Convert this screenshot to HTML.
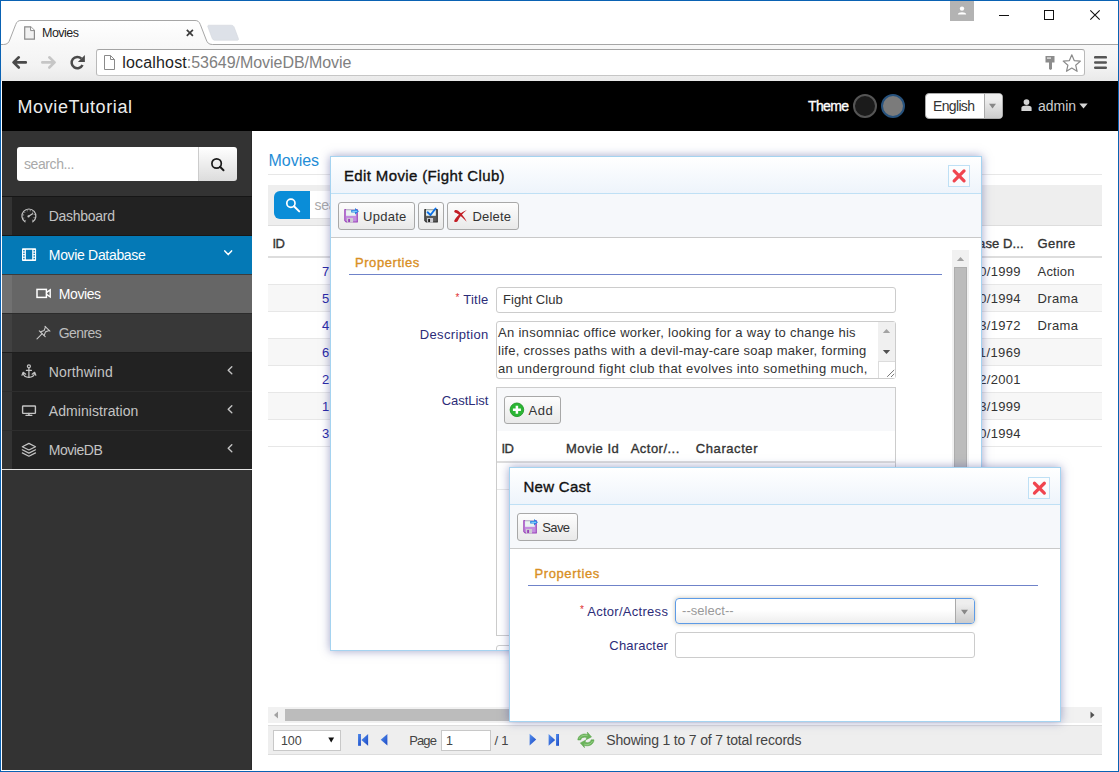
<!DOCTYPE html>
<html lang="en">
<head>
<meta charset="utf-8">
<title>Movies</title>
<style>
*{box-sizing:border-box;margin:0;padding:0}
html,body{width:1119px;height:772px;overflow:hidden;background:#fff}
body{font-family:"Liberation Sans",sans-serif;font-size:13px;color:#333;position:relative}
.a{position:absolute}
.t{position:absolute;white-space:pre;line-height:1}
svg{position:absolute;overflow:visible}
#win{left:0;top:0;width:1119px;height:772px;border:1px solid #0a62b3;z-index:50}
#toolbar{left:0;top:44px;width:1119px;height:37px;background:linear-gradient(#f8f8f8,#f3f3f3 60%,#e9e9e9)}
#urlbox{left:96px;top:49px;width:989px;height:27px;background:#fff;border:1px solid #b9b9b9;border-top-color:#a3a3a3;border-bottom-color:#c6c6c6;border-radius:3px}
#hdr{left:2px;top:81px;width:1116px;height:50px;background:#000}
.circ{width:24px;height:24px;border-radius:50%;border:2px solid #555}
#lang{left:925px;top:93px;width:78px;height:26px;background:#fff;border:1px solid #aaa;border-radius:4px;overflow:hidden}
#lang i{position:absolute;left:58px;top:0;width:19px;height:24px;border-left:1px solid #aaa;background:linear-gradient(#eee 20%,#ccc)}
#side{left:2px;top:131px;width:250px;height:639px;background:#333;border-right:1px solid #2a2a2a}
.row{left:2px;width:250px;height:39px;background:#222;border-bottom:1px solid #2d2d2d}
.row b{position:absolute;left:0;top:0;width:10px;height:38px;background:#333}
#sin{left:17px;top:147px;width:182px;height:34px;background:#fff;border-radius:3px 0 0 3px}
#sbtn{left:198px;top:147px;width:39px;height:34px;background:linear-gradient(#fff,#dcdcdc);border-left:1px solid #ccc;border-radius:0 3px 3px 0}
.btn{border:1px solid #a8a8a8;border-radius:3px;background:linear-gradient(#fdfdfd,#e9e9e9)}
.inp{border:1px solid #ccc;border-radius:3px;background:#fff}
.dlg{background:#fff;border:1px solid #a5d3f0;box-shadow:0 0 9px rgba(70,75,150,.5);overflow:hidden}
.dlg .in{position:absolute}
.tb{background:linear-gradient(#ffffff,#eef4fb);border-bottom:1px solid #bfe0f5}
.bar{background:#f6f8fb;border-bottom:1px solid #c9c9c9}
.xb{width:22px;height:22px;border:1px solid #bfe0f5;background:rgba(255,255,255,.45)}
.gl{height:1px;background:#e7e7e7;left:268px;width:834px}
.gr{left:268px;width:834px;height:27px;background:#f7f7f7}
</style>
</head>
<body>
<!-- ===== browser chrome ===== -->
<div class="a" id="toolbar"></div>
<svg style="left:0;top:0" width="1119" height="46" viewBox="0 0 1119 46">
  <defs><linearGradient id="tg" x1="0" y1="0" x2="0" y2="1"><stop offset="0" stop-color="#fff"/><stop offset="1" stop-color="#f8f8f8"/></linearGradient></defs>
  <path d="M0 44.5 H3.5 C7.5 44.5 8.7 42.5 9.7 40 L15.7 24.5 C16.8 21.6 18.3 20.5 21 20.5 H195 C197.7 20.5 199.2 21.6 200.3 24.5 L206.3 40 C207.3 42.5 208.5 44.5 212.5 44.5 H1119" fill="url(#tg)" stroke="#a6a6a6" stroke-width="1"/>
  <path d="M208 27.2 C207.4 25.7 207.9 25.2 209.4 25.2 H231 C232.8 25.2 233.6 25.9 234.2 27.3 L238.3 38.3 C238.9 39.8 238.4 40.3 236.9 40.3 H215.3 C213.5 40.3 212.7 39.6 212.1 38.2 Z" fill="#dde1e8" stroke="#d3d7de" stroke-width=".6"/>
  <!-- page icon in tab -->
  <path d="M24.7 26.8 H30.6 L34.4 30.6 V39.2 H24.7 Z" fill="#f1f1f1" stroke="#8a8a8a" stroke-width="1.2"/>
  <path d="M30.6 26.8 V30.6 H34.4" fill="#fff" stroke="#8a8a8a" stroke-width="1"/>
  <path d="M186.8 29.8 L192.9 35.9 M192.9 29.8 L186.8 35.9" stroke="#3c3c3c" stroke-width="1.7" fill="none"/>
</svg>
<div class="a" id="urlbox"></div>
<svg style="left:0;top:44px" width="1119" height="37" viewBox="0 44 1119 37">
  <!-- back -->
  <path d="M25.8 62.4 H14.5 M18.8 57.3 L13.5 62.4 L18.8 67.5" fill="none" stroke="#4a4a4a" stroke-width="2.6" stroke-linejoin="round" stroke-linecap="round"/>
  <!-- forward (disabled) -->
  <path d="M42.3 62.4 H53.6 M49.3 57.3 L54.6 62.4 L49.3 67.5" fill="none" stroke="#c6c6c6" stroke-width="2.6" stroke-linejoin="round" stroke-linecap="round"/>
  <!-- reload -->
  <path d="M81.4 58.6 A5.7 5.7 0 1 0 82.5 65" fill="none" stroke="#4a4a4a" stroke-width="2.5"/>
  <path d="M84.9 54.9 V61.9 H77.9 Z" fill="#4a4a4a"/>
  <!-- page icon -->
  <path d="M104.5 55.5 H110.5 L114.5 59.5 V69.5 H104.5 Z" fill="#fff" stroke="#8a8a8a" stroke-width="1"/>
  <path d="M110.5 55.5 V59.5 H114.5" fill="none" stroke="#8a8a8a" stroke-width="1"/>
  <!-- key -->
  <path d="M1045.5 56 H1054.5 V62.5 H1052 V69 L1050.5 70 L1049 69 V62.5 H1045.5 Z" fill="#8c8c8c"/>
  <rect x="1047" y="57.3" width="4" height="1.6" fill="#d8d8d8"/>
  <!-- star -->
  <path d="M1071.8 54.8 L1074.2 60.6 L1080.4 61.1 L1075.7 65.2 L1077.1 71.3 L1071.8 68 L1066.5 71.3 L1067.9 65.2 L1063.2 61.1 L1069.4 60.6 Z" fill="#fff" stroke="#8a8a8a" stroke-width="1.2" stroke-linejoin="round"/>
  <!-- hamburger -->
  <rect x="1094" y="56" width="13" height="2.6" rx="1.2" fill="#555"/>
  <rect x="1094" y="61.2" width="13" height="2.6" rx="1.2" fill="#555"/>
  <rect x="1094" y="66.4" width="13" height="2.6" rx="1.2" fill="#555"/>
</svg>
<!-- window controls -->
<div class="a" style="left:950px;top:1px;width:24px;height:20px;background:#b3b3b3"></div>
<svg style="left:950px;top:1px" width="24" height="20" viewBox="0 0 24 20">
  <circle cx="12" cy="7.6" r="2.2" fill="#fff"/>
  <path d="M7.8 13.6 C7.8 10.6 16.2 10.6 16.2 13.6 Z" fill="#fff"/>
</svg>
<svg style="left:990px;top:5px" width="120" height="20" viewBox="990 5 120 20">
  <path d="M999 15.5 H1009" stroke="#111" stroke-width="1"/>
  <rect x="1044.5" y="10.5" width="9" height="9" fill="none" stroke="#111" stroke-width="1"/>
  <path d="M1090.3 10.3 L1099.7 19.7 M1099.7 10.3 L1090.3 19.7" stroke="#111" stroke-width="1.1"/>
</svg>

<!-- ===== app header ===== -->
<div class="a" id="hdr"></div>
<div class="a circ" style="left:853px;top:94px;background:#1b1b1b"></div>
<div class="a circ" style="left:881px;top:94px;background:#7b7b7b;border-color:#27527d"></div>
<div class="a" id="lang"><i></i></div>
<svg style="left:988px;top:103px" width="9" height="6" viewBox="0 0 9 6"><path d="M1 .8 H8 L4.5 5.6 Z" fill="#888"/></svg>
<svg style="left:1021px;top:99px" width="11" height="12" viewBox="0 0 11 12">
  <circle cx="5.5" cy="3.1" r="2.9" fill="#d4d4d4"/>
  <path d="M.4 12 V8.8 C.4 5.8 10.6 5.8 10.6 8.8 V12 Z" fill="#d4d4d4"/>
</svg>
<svg style="left:1079px;top:103px" width="9" height="6" viewBox="0 0 9 6"><path d="M.3 .6 H8.7 L4.5 5.4 Z" fill="#d4d4d4"/></svg>

<!-- ===== sidebar ===== -->
<div class="a" id="side"></div>
<div class="a" id="sin"></div><div class="a" id="sbtn"></div>
<svg style="left:209px;top:156px" width="18" height="18" viewBox="0 0 18 18">
  <circle cx="7.6" cy="7.5" r="4.7" fill="none" stroke="#1a1a1a" stroke-width="1.7"/>
  <path d="M11 10.8 L14.5 14.2" stroke="#1a1a1a" stroke-width="2" stroke-linecap="round"/>
</svg>
<div class="a" style="left:2px;top:196px;width:250px;height:1px;background:#161616"></div>
<div class="a row" style="top:197px;border-bottom-color:#181818"><b></b></div>
<div class="a row" style="top:236px;background:#0479b6;border-bottom-color:#3c3c3c"></div>
<div class="a row" style="top:275px;background:#666;border-bottom-color:#2c2c2c"><b style="background:#717171"></b></div>
<div class="a row" style="top:314px;background:#383838;border-bottom-color:#1e1e1e"><b style="background:#414141"></b></div>
<div class="a row" style="top:353px"><b></b></div>
<div class="a row" style="top:392px"><b></b></div>
<div class="a row" style="top:431px;border-bottom-color:#222"><b></b></div>
<div class="a" style="left:2px;top:469px;width:250px;height:1px;background:#e4e4e4"></div>
<svg style="left:0;top:0" width="260" height="772" viewBox="0 0 260 772" fill="none" stroke-linecap="round" stroke-linejoin="round">
  <!-- gauge -->
  <g stroke="#c4c4c4" stroke-width="1.3">
    <path d="M25 221.8 A7 7 0 1 1 32.8 221.8" stroke-width="1.2"/>
    <path d="M25.9 220.6 A5.5 5.5 0 1 1 31.9 220.6" stroke-width="1.2" stroke-dasharray=".9 2" stroke-linecap="butt" opacity=".75"/>
    <path d="M28.6 216.3 L32.6 213.7"/>
  </g>
  <circle cx="28.5" cy="216.4" r="1.1" fill="#c4c4c4"/>
  <!-- film -->
  <g stroke="none">
    <rect x="22" y="248.2" width="14.1" height="12.8" rx=".8" fill="#fff"/>
    <rect x="25.9" y="249.8" width="6.3" height="9.6" fill="#0479b6"/>
    <g fill="#0479b6"><rect x="23.2" y="250" width="1.4" height="1.5"/><rect x="23.2" y="252.6" width="1.4" height="1.5"/><rect x="23.2" y="255.2" width="1.4" height="1.5"/><rect x="23.2" y="257.8" width="1.4" height="1.5"/>
    <rect x="33.5" y="250" width="1.4" height="1.5"/><rect x="33.5" y="252.6" width="1.4" height="1.5"/><rect x="33.5" y="255.2" width="1.4" height="1.5"/><rect x="33.5" y="257.8" width="1.4" height="1.5"/></g>
  </g>
  <!-- camera -->
  <g stroke="#fff" stroke-width="1.5" stroke-linejoin="miter">
    <rect x="37" y="289.4" width="9.4" height="8"/>
    <path d="M46.6 292.4 L50.2 289.9 V297 L46.6 294.4" stroke-width="1.4"/>
  </g>
  <!-- pin -->
  <g stroke="#c4c4c4" stroke-width="1.15">
    <path d="M37 338.8 L42 333.9"/>
    <path d="M39.3 330.8 L45.2 336.7"/>
    <path d="M45 326.3 L49.9 331.2"/>
    <path d="M44.1 335.5 L45.5 331.9 L49.2 330.5 M40.5 331.9 L44.1 330.5 L45.5 326.9"/>
  </g>
  <!-- anchor -->
  <g stroke="#c4c4c4" stroke-width="1.25">
    <circle cx="28.9" cy="366.3" r="1.5"/>
    <path d="M28.9 367.9 V377.4 M26.4 370.4 H31.4"/>
    <path d="M23.3 373.2 C23.8 378.6 34 378.6 34.5 373.2"/>
    <path d="M22 375.2 L23.2 372.3 L25.7 374.2 M35.8 375.2 L34.6 372.3 L32.1 374.2"/>
  </g>
  <!-- monitor -->
  <g stroke="#c4c4c4" stroke-width="1.4" stroke-linejoin="miter">
    <rect x="22.6" y="406" width="12.8" height="7.4" rx=".6"/>
    <path d="M28.9 413.5 V415.2" stroke-width="1.6"/>
    <path d="M25.9 415.4 H31.9" stroke-width="1.1"/>
  </g>
  <!-- layers -->
  <g stroke="#c4c4c4" stroke-width="1.2">
    <path d="M28.9 443.4 L35.5 446.7 L28.9 450 L22.3 446.7 Z"/>
    <path d="M22.3 449.8 L28.9 453.1 L35.5 449.8 M22.3 452.9 L28.9 456.2 L35.5 452.9"/>
  </g>
  <!-- chevrons -->
  <path d="M224.8 250.9 L228.2 254.6 L231.6 250.9" stroke="#fff" stroke-width="1.5"/>
  <g stroke="#c4c4c4" stroke-width="1.4">
    <path d="M231.8 366.8 L228.2 370.3 L231.8 373.8"/>
    <path d="M231.8 405.8 L228.2 409.3 L231.8 412.8"/>
    <path d="M231.8 444.8 L228.2 448.3 L231.8 451.8"/>
  </g>
</svg>

<!-- ===== content ===== -->
<div class="a gl" style="top:174px"></div>
<div class="a" style="left:268px;top:185px;width:834px;height:41px;background:#eee;border-bottom:1px solid #ddd"></div>
<div class="a" style="left:274px;top:191px;width:36px;height:28px;background:#0a8dd8;border-radius:6px 0 0 6px"></div>
<div class="a" style="left:310px;top:191px;width:200px;height:28px;background:#fff;border-bottom:1px solid #e2e2e2"></div>
<svg style="left:283px;top:196px" width="18" height="18" viewBox="0 0 18 18">
  <circle cx="7.9" cy="7.2" r="4.1" fill="none" stroke="#fff" stroke-width="1.7"/>
  <path d="M11 10.3 L16.2 15.4" stroke="#fff" stroke-width="2" stroke-linecap="round"/>
</svg>
<div class="a" style="left:268px;top:256px;width:834px;height:2px;background:#ddd"></div>
<div class="a gr" style="top:285px"></div>
<div class="a gr" style="top:339px"></div>
<div class="a gr" style="top:393px"></div>
<div class="a gl" style="top:284px"></div><div class="a gl" style="top:311px"></div><div class="a gl" style="top:338px"></div>
<div class="a gl" style="top:365px"></div><div class="a gl" style="top:392px"></div><div class="a gl" style="top:419px"></div><div class="a gl" style="top:446px"></div>
<!-- h-scrollbar -->
<div class="a" style="left:268px;top:707px;width:834px;height:16px;background:#f1f1f1"></div>
<div class="a" style="left:285px;top:709px;width:760px;height:12px;background:#bcbcbc"></div>
<svg style="left:268px;top:707px" width="834" height="16" viewBox="0 0 834 16"><path d="M10 4.5 V11.5 L6 8 Z" fill="#a3a3a3"/><path d="M822.5 4.5 V11.5 L826.5 8 Z" fill="#505050"/></svg>
<!-- pager -->
<div class="a" style="left:268px;top:725px;width:834px;height:30px;background:#eee;border-top:1px solid #ddd;border-bottom:1px solid #ddd"></div>
<div class="a" style="left:273px;top:730px;width:68px;height:21px;background:#fff;border:1px solid #c8c8c8"></div>
<svg style="left:328px;top:737px" width="8" height="7" viewBox="0 0 8 7"><path d="M.3 .4 H6.1 L3.2 5.6 Z" fill="#111"/></svg>
<div class="a" style="left:441px;top:730px;width:50px;height:21px;background:#fff;border:1px solid #c8c8c8"></div>
<svg style="left:350px;top:730px" width="260" height="22" viewBox="350 730 260 22">
  <defs><linearGradient id="pg" x1="0" y1="0" x2="1" y2="1"><stop offset="0" stop-color="#5590ee"/><stop offset="1" stop-color="#1a48c4"/></linearGradient></defs>
  <rect x="358" y="734" width="2.9" height="11.8" fill="url(#pg)"/><path d="M368.1 734 V745.8 L361.4 739.9 Z" fill="url(#pg)"/>
  <path d="M387.4 734 V745.6 L380.7 739.8 Z" fill="url(#pg)"/>
  <path d="M529.6 733.8 V745.4 L536.2 739.6 Z" fill="url(#pg)"/>
  <path d="M548.6 734 V745.8 L555.2 739.9 Z" fill="url(#pg)"/><rect x="556" y="734" width="3" height="11.8" fill="url(#pg)"/>
  <!-- refresh -->
  <g id="rf">
  <path d="M577.8 740 C578 735 583.4 732.9 587.7 734.5 L587.3 732.1 L591.5 736.9 L586.1 739.7 L586.7 737.5 C583.6 736.5 580.9 737.8 580.7 740 Z" fill="#6ab45a" stroke="#58a349" stroke-width=".5"/>
  <path d="M594 739.8 C593.8 744.8 588.4 746.9 584.1 745.3 L584.5 747.7 L580.3 742.9 L585.7 740.1 L585.1 742.3 C588.2 743.3 590.9 742 591.1 739.8 Z" fill="#6ab45a" stroke="#58a349" stroke-width=".5"/>
  <path d="M579.4 738.6 C580.5 735.6 584.5 734.6 587.5 735.7" fill="none" stroke="#9ed190" stroke-width=".9"/>
  <path d="M592.4 741.2 C591.3 744.2 587.3 745.2 584.3 744.1" fill="none" stroke="#9ed190" stroke-width=".9"/>
  </g>
</svg>
<div class="t" style="left:42.0px;top:26.8px;font-size:12.5px;color:#1e1e1e;letter-spacing:-0.519px;">Movies</div>
<div class="t" style="left:122.2px;top:55.1px;font-size:16px;color:#1e1e1e;letter-spacing:0.18px;">localhost</div>
<div class="t" style="left:186.8px;top:55.1px;font-size:16px;color:#808080;letter-spacing:-0.038px;">:53649/MovieDB/Movie</div>
<div class="t" style="left:17.5px;top:97.8px;font-size:18px;color:#ececec;letter-spacing:0.594px;">MovieTutorial</div>
<div class="t" style="left:808.0px;top:99.3px;font-size:14px;color:#ffffff;-webkit-text-stroke:.35px #ffffff;letter-spacing:-0.645px;">Theme</div>
<div class="t" style="left:933.0px;top:99.3px;font-size:14px;color:#333333;letter-spacing:-0.654px;">English</div>
<div class="t" style="left:1038.0px;top:99.1px;font-size:14px;color:#cfcfcf;letter-spacing:-0.035px;">admin</div>
<div class="t" style="left:24.0px;top:157.1px;font-size:14px;color:#a9a9a9;letter-spacing:-0.413px;">search...</div>
<div class="t" style="left:48.8px;top:209.1px;font-size:14px;color:#c4c4c4;letter-spacing:-0.287px;">Dashboard</div>
<div class="t" style="left:48.8px;top:248.1px;font-size:14px;color:#ffffff;letter-spacing:-0.321px;">Movie Database</div>
<div class="t" style="left:58.8px;top:287.1px;font-size:14px;color:#ffffff;letter-spacing:-0.432px;">Movies</div>
<div class="t" style="left:58.8px;top:326.1px;font-size:14px;color:#bdbdbd;letter-spacing:-0.584px;">Genres</div>
<div class="t" style="left:48.8px;top:365.1px;font-size:14px;color:#c4c4c4;letter-spacing:0.121px;">Northwind</div>
<div class="t" style="left:48.8px;top:404.1px;font-size:14px;color:#c4c4c4;letter-spacing:0.069px;">Administration</div>
<div class="t" style="left:48.8px;top:443.1px;font-size:14px;color:#c4c4c4;letter-spacing:-0.466px;">MovieDB</div>
<div class="t" style="left:268.6px;top:152.5px;font-size:16px;color:#1f8dd6;letter-spacing:-0.058px;">Movies</div>
<div class="t" style="left:314.4px;top:198.1px;font-size:14px;color:#aaaaaa;letter-spacing:-0.263px;">search...</div>
<div class="t" style="left:272.5px;top:237.0px;font-size:13px;color:#333333;-webkit-text-stroke:.35px #333333;letter-spacing:-0.5px;">ID</div>
<div class="t" style="left:951.0px;top:236.8px;font-size:13px;color:#333333;-webkit-text-stroke:.35px #333333;letter-spacing:0.096px;">Release D...</div>
<div class="t" style="left:1037.6px;top:236.8px;font-size:13px;color:#333333;-webkit-text-stroke:.35px #333333;letter-spacing:0.365px;">Genre</div>
<div class="t" style="left:322.0px;top:264.8px;font-size:13px;color:#2626a6;">7</div>
<div class="t" style="left:952.8px;top:264.8px;font-size:13px;color:#333333;letter-spacing:0.302px;">10/10/1999</div>
<div class="t" style="left:1037.6px;top:264.8px;font-size:13px;color:#333333;letter-spacing:0.152px;">Action</div>
<div class="t" style="left:322.0px;top:291.8px;font-size:13px;color:#2626a6;">5</div>
<div class="t" style="left:952.8px;top:291.8px;font-size:13px;color:#333333;letter-spacing:0.302px;">09/10/1994</div>
<div class="t" style="left:1037.6px;top:291.8px;font-size:13px;color:#333333;letter-spacing:0.346px;">Drama</div>
<div class="t" style="left:322.0px;top:318.8px;font-size:13px;color:#2626a6;">4</div>
<div class="t" style="left:952.8px;top:318.8px;font-size:13px;color:#333333;letter-spacing:0.302px;">03/13/1972</div>
<div class="t" style="left:1037.6px;top:318.8px;font-size:13px;color:#333333;letter-spacing:0.346px;">Drama</div>
<div class="t" style="left:322.0px;top:345.8px;font-size:13px;color:#2626a6;">6</div>
<div class="t" style="left:952.8px;top:345.8px;font-size:13px;color:#333333;letter-spacing:0.41px;">12/11/1969</div>
<div class="t" style="left:322.0px;top:372.8px;font-size:13px;color:#2626a6;">2</div>
<div class="t" style="left:952.8px;top:372.8px;font-size:13px;color:#333333;letter-spacing:0.302px;">12/12/2001</div>
<div class="t" style="left:322.0px;top:399.8px;font-size:13px;color:#2626a6;">1</div>
<div class="t" style="left:952.8px;top:399.8px;font-size:13px;color:#333333;letter-spacing:0.302px;">03/13/1999</div>
<div class="t" style="left:322.0px;top:426.8px;font-size:13px;color:#2626a6;">3</div>
<div class="t" style="left:952.8px;top:426.8px;font-size:13px;color:#333333;letter-spacing:0.302px;">09/10/1994</div>
<div class="t" style="left:280.9px;top:734.8px;font-size:12.5px;color:#444444;letter-spacing:0.02px;">100</div>
<div class="t" style="left:409.2px;top:734.0px;font-size:13px;color:#444444;letter-spacing:-0.892px;">Page</div>
<div class="t" style="left:446.0px;top:734.6px;font-size:12.5px;color:#444444;">1</div>
<div class="t" style="left:494.4px;top:734.0px;font-size:13px;color:#444444;letter-spacing:-0.234px;">/ 1</div>
<div class="t" style="left:606.3px;top:732.5px;font-size:14px;color:#444444;letter-spacing:-0.175px;">Showing 1 to 7 of 7 total records</div>

<!-- ===== dialog 1 ===== -->
<div class="a dlg" style="left:330px;top:156px;width:652px;height:495px"><div class="in" style="left:-331px;top:-157px;width:1119px;height:772px">
  <div class="a tb" style="left:331px;top:157px;width:650px;height:37px"></div>
  <div class="a xb" style="left:948px;top:165px"></div>
  <div class="a bar" style="left:331px;top:194px;width:650px;height:44px"></div>
  <div class="a btn" style="left:338px;top:202px;width:77px;height:28px"></div>
  <div class="a btn" style="left:418px;top:202px;width:26px;height:28px"></div>
  <div class="a btn" style="left:447px;top:202px;width:72px;height:28px"></div>
  <div class="a" style="left:349px;top:274px;width:593px;height:1px;background:#6f83c9"></div>
  <div class="a inp" style="left:496px;top:287px;width:400px;height:26px"></div>
  <div class="a inp" style="left:496px;top:321px;width:400px;height:58px"></div>
  <div class="a" style="left:878px;top:322px;width:17px;height:39px;background:#f0f0f0"></div>
  <div class="a" style="left:878px;top:361px;width:17px;height:17px;background:#fff;border-left:1px solid #dcdcdc;border-top:1px solid #dcdcdc"></div>
  <svg style="left:878px;top:322px" width="17" height="56" viewBox="878 322 17 56"><path d="M882.8 333 H890.2 L886.5 329 Z" fill="#a3a3a3"/><path d="M882.8 350 H890.2 L886.5 354 Z" fill="#505050"/><path d="M887.2 376.8 L894.2 369.9 M891 377 L894.2 373.9" stroke="#777" stroke-width="1"/></svg>
  <!-- cast grid -->
  <div class="a" style="left:496px;top:387px;width:400px;height:249px;background:#fff;border:1px solid #ccc"></div>
  <div class="a" style="left:497px;top:388px;width:398px;height:43px;background:#f7f8fa"></div>
  <div class="a btn" style="left:504px;top:396px;width:57px;height:28px"></div>
  <div class="a" style="left:497px;top:461px;width:398px;height:2px;background:#ddd"></div>
  <div class="a" style="left:497px;top:489px;width:398px;height:1px;background:#e7e7e7"></div>
  <div class="a inp" style="left:496px;top:645px;width:400px;height:26px"></div>
  <!-- dialog scrollbar -->
  <div class="a" style="left:952px;top:250px;width:17px;height:400px;background:#f1f1f1"></div>
  <div class="a" style="left:954px;top:267px;width:13px;height:340px;background:#bcbcbc;border:1px solid #adadad"></div>
  <svg style="left:952px;top:250px" width="17" height="17" viewBox="0 0 17 17"><path d="M4.9 11 H12.2 L8.55 6.9 Z" fill="#a3a3a3"/></svg>
  <svg style="left:0;top:0" width="1119" height="772" viewBox="0 0 1119 772">
  <g transform="translate(344.05 208.8)">
    <path d="M.2 .9 Q.2 .2 .9 .2 H13.1 Q13.8 .2 13.8 .9 V13.1 Q13.8 13.8 13.1 13.8 H2 L.2 12 Z" fill="#9943b8"/>
    <path d="M1.3 1 H12.7 V12.8 H2.5 L1.3 11.6 Z" fill="#c48de0"/>
    <rect x="2" y=".7" width="9.8" height="6.3" fill="#e9f3f1"/>
    <rect x="2" y=".7" width="9.8" height=".9" fill="#b9c6c3"/>
    <rect x="3" y="9.2" width="6" height="4.6" fill="#cdcdd2"/>
    <rect x="4.1" y="10.1" width="1.9" height="3.1" fill="#9943b8"/>
  </g>
  <path d="M351.2 210.1 H355 V208.1 L359 211.3 L355 214.5 V212.5 H351.2 Z" fill="#2c82e2"/><path d="M352.3 211.3 H357.2" stroke="#8fdcff" stroke-width="1"/>
  <g transform="translate(424.05 208.8)">
    <path d="M.2 .9 Q.2 .2 .9 .2 H13.1 Q13.8 .2 13.8 .9 V13.1 Q13.8 13.8 13.1 13.8 H2 L.2 12 Z" fill="#2c2c2c"/>
    <path d="M1.3 1 H12.7 V12.8 H2.5 L1.3 11.6 Z" fill="#5a5a5a"/>
    <rect x="2" y=".7" width="9.8" height="6.3" fill="#e9f3f1"/>
    <rect x="2" y=".7" width="9.8" height=".9" fill="#b9c6c3"/>
    <rect x="3" y="9.2" width="6" height="4.6" fill="#cdcdd2"/>
    <rect x="4.1" y="10.1" width="1.9" height="3.1" fill="#1e1e1e"/>
  </g>
  <path d="M427.6 212.3 L430.5 215 L435.6 208.5" fill="none" stroke="#0b6fe8" stroke-width="1.9" stroke-linecap="round" stroke-linejoin="round"/>
  <path d="M454.2 211.6 C454 209.8 456.6 209.5 458.2 210.8 C461.5 213.5 464.6 217.5 466.7 221.7 C463.8 218.6 460.5 215.4 457.5 213.7 C456 212.9 454.4 212.9 454.2 211.6 Z" fill="#c21c24"/><path d="M454.3 220.5 C456.5 216.4 461 212.2 466.9 210 C462.6 213 459.6 217 457.7 221 C456.9 222.7 453.5 222.3 454.3 220.5 Z" fill="#c21c24"/>
  <circle cx="516.9" cy="409.8" r="6.8" fill="#2bb634" stroke="#1f9827" stroke-width=".9"/>
  <path d="M516.9 405.8 V413.8 M512.9 409.8 H520.9" stroke="#fff" stroke-width="2.5" fill="none"/>
  <path d="M954.15 170.95000000000002 L964.0500000000001 180.85 M964.0500000000001 170.95000000000002 L954.15 180.85" stroke="#f0454f" stroke-width="3.2" stroke-linecap="round" fill="none"/>
</svg>
  <div class="t" style="left:344.0px;top:168.3px;font-size:15px;color:#111111;-webkit-text-stroke:.35px #111111;letter-spacing:0.365px;">Edit Movie (Fight Club)</div>
<div class="t" style="left:363.0px;top:210.0px;font-size:13px;color:#333333;letter-spacing:0.276px;">Update</div>
<div class="t" style="left:472.5px;top:210.0px;font-size:13px;color:#333333;letter-spacing:0.164px;">Delete</div>
<div class="t" style="left:355.0px;top:256.2px;font-size:13px;color:#d98f24;-webkit-text-stroke:.35px #d98f24;letter-spacing:0.561px;">Properties</div>
<div class="t" style="left:455.5px;top:293.1px;font-size:10px;color:#e03030;">*</div>
<div class="t" style="left:463.2px;top:293.4px;font-size:13px;color:#2c2c78;letter-spacing:0.255px;">Title</div>
<div class="t" style="left:503.0px;top:293.4px;font-size:13px;color:#333333;letter-spacing:0.05px;">Fight Club</div>
<div class="t" style="left:419.8px;top:327.8px;font-size:13px;color:#2c2c78;letter-spacing:0.347px;">Description</div>
<div class="t" style="left:498.0px;top:326.0px;font-size:13px;color:#333333;letter-spacing:0.302px;">An insomniac office worker, looking for a way to change his</div>
<div class="t" style="left:498.0px;top:344.0px;font-size:13px;color:#333333;letter-spacing:0.274px;">life, crosses paths with a devil-may-care soap maker, forming</div>
<div class="t" style="left:498.0px;top:361.6px;font-size:13px;color:#333333;letter-spacing:0.377px;">an underground fight club that evolves into something much,</div>
<div class="t" style="left:441.8px;top:394.0px;font-size:13px;color:#2c2c78;letter-spacing:-0.067px;">CastList</div>
<div class="t" style="left:528.6px;top:404.0px;font-size:13px;color:#333333;letter-spacing:0.53px;">Add</div>
<div class="t" style="left:501.4px;top:442.0px;font-size:13px;color:#333333;-webkit-text-stroke:.35px #333333;letter-spacing:-0.4px;">ID</div>
<div class="t" style="left:566.0px;top:442.0px;font-size:13px;color:#333333;-webkit-text-stroke:.35px #333333;letter-spacing:0.523px;">Movie Id</div>
<div class="t" style="left:630.7px;top:442.0px;font-size:13px;color:#333333;-webkit-text-stroke:.35px #333333;letter-spacing:0.475px;">Actor/...</div>
<div class="t" style="left:695.8px;top:442.0px;font-size:13px;color:#333333;-webkit-text-stroke:.35px #333333;letter-spacing:0.578px;">Character</div>
</div></div>

<!-- ===== dialog 2 ===== -->
<div class="a dlg" style="left:509px;top:467px;width:552px;height:255px"><div class="in" style="left:-510px;top:-468px;width:1119px;height:772px">
  <div class="a tb" style="left:510px;top:468px;width:550px;height:37px"></div>
  <div class="a xb" style="left:1028px;top:477px"></div>
  <div class="a bar" style="left:510px;top:505px;width:550px;height:44px"></div>
  <div class="a btn" style="left:517px;top:513px;width:61px;height:28px"></div>
  <div class="a" style="left:528px;top:585px;width:510px;height:1px;background:#6f83c9"></div>
  <div class="a inp" style="left:675px;top:598px;width:300px;height:26px;border-color:#5d9be6;border-radius:4px;background:linear-gradient(#fff 45%,#eee);box-shadow:0 0 4px rgba(110,100,70,.4)"></div>
  <div class="a" style="left:955px;top:599px;width:19px;height:24px;border-left:1px solid #aaa;background:linear-gradient(#eee 20%,#ccc);border-radius:0 3px 3px 0"></div>
  <svg style="left:960px;top:609px" width="9" height="6" viewBox="0 0 9 6"><path d="M1 .8 H8 L4.5 5.6 Z" fill="#888"/></svg>
  <div class="a inp" style="left:675px;top:632px;width:300px;height:26px"></div>
  <svg style="left:0;top:0" width="1119" height="772" viewBox="0 0 1119 772">
  <g transform="translate(523.05 519.8)">
    <path d="M.2 .9 Q.2 .2 .9 .2 H13.1 Q13.8 .2 13.8 .9 V13.1 Q13.8 13.8 13.1 13.8 H2 L.2 12 Z" fill="#9943b8"/>
    <path d="M1.3 1 H12.7 V12.8 H2.5 L1.3 11.6 Z" fill="#c48de0"/>
    <rect x="2" y=".7" width="9.8" height="6.3" fill="#e9f3f1"/>
    <rect x="2" y=".7" width="9.8" height=".9" fill="#b9c6c3"/>
    <rect x="3" y="9.2" width="6" height="4.6" fill="#cdcdd2"/>
    <rect x="4.1" y="10.1" width="1.9" height="3.1" fill="#9943b8"/>
  </g>
  <path d="M530.2 521.1 H534 V519.1 L538 522.3 L534 525.5 V523.5 H530.2 Z" fill="#2c82e2"/><path d="M531.3 522.3 H536.2" stroke="#8fdcff" stroke-width="1"/>
  <path d="M1034.45 483.25 L1044.3500000000001 493.15 M1044.3500000000001 483.25 L1034.45 493.15" stroke="#f0454f" stroke-width="3.2" stroke-linecap="round" fill="none"/>
</svg>
  <div class="t" style="left:523.5px;top:479.3px;font-size:15px;color:#111111;-webkit-text-stroke:.35px #111111;letter-spacing:0.281px;">New Cast</div>
<div class="t" style="left:542.3px;top:521.0px;font-size:13px;color:#333333;letter-spacing:-0.647px;">Save</div>
<div class="t" style="left:534.4px;top:567.0px;font-size:13px;color:#d98f24;-webkit-text-stroke:.35px #d98f24;letter-spacing:0.628px;">Properties</div>
<div class="t" style="left:580.0px;top:604.7px;font-size:10px;color:#e03030;">*</div>
<div class="t" style="left:587.2px;top:605.0px;font-size:13px;color:#2c2c78;letter-spacing:0.284px;">Actor/Actress</div>
<div class="t" style="left:682.0px;top:604.0px;font-size:13px;color:#999999;letter-spacing:0.047px;">--select--</div>
<div class="t" style="left:609.3px;top:639.0px;font-size:13px;color:#2c2c78;letter-spacing:0.19px;">Character</div>
</div></div>

<div class="a" id="win"></div>
</body>
</html>
